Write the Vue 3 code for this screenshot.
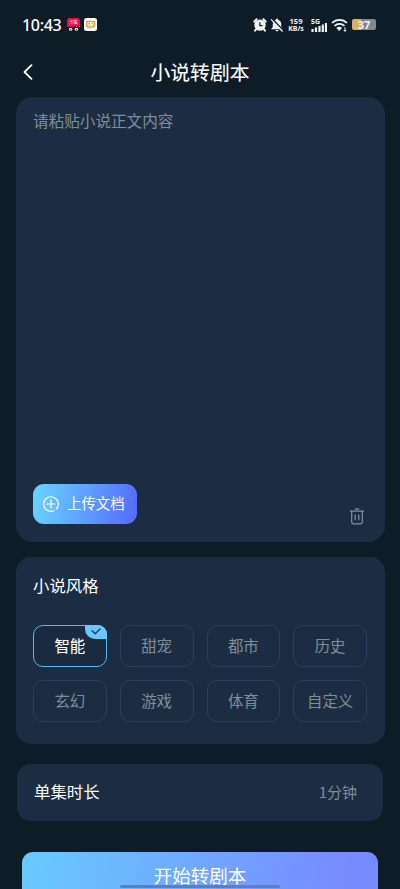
<script setup>
import { ref } from 'vue'

const styles = ['智能', '甜宠', '都市', '历史', '玄幻', '游戏', '体育', '自定义']
const selected = ref('智能')
</script>

<template>
  <div class="screen">
    <div class="status">
      <span class="clock">10:43</span>
      <svg class="app-icon" viewBox="0 0 13 13">
        <rect width="13" height="13" rx="2.5" fill="#080a0d" />
        <path d="M2.5 0h8A2.5 2.5 0 0 1 13 2.5V8.7H0V2.5A2.5 2.5 0 0 1 2.5 0Z" fill="#ef0d50" />
        <text x="6.5" y="6.2" text-anchor="middle" font-size="4" fill="#fff">天猫</text>
        <ellipse cx="3.6" cy="11.4" rx="1.8" ry="1.4" fill="#fff" />
        <ellipse cx="9.4" cy="11.4" rx="1.8" ry="1.4" fill="#fff" />
        <circle cx="3.6" cy="11.6" r=".6" fill="#111" />
        <circle cx="9.4" cy="11.6" r=".6" fill="#111" />
      </svg>
      <svg class="app-icon second" viewBox="0 0 13 13">
        <rect width="13" height="13" rx="2.5" fill="#fff" />
        <path d="M2.200 2.600 4.300 3q2.300-.8 4.500 0l2.100-.5.1 2.600c.8 3.400-1.200 5.400-4.500 5.400S1.300 8.400 2.100 5Z" fill="#f5a32c" />
        <ellipse cx="6.600" cy="5.900" rx="3.200" ry="1.900" fill="#fff" />
        <circle cx="5.300" cy="5.800" r=".7" fill="#c9741a" />
        <circle cx="8" cy="5.600" r=".7" fill="#c9741a" />
        <path d="M3.800 8.800q2.800 1 5.400 0" stroke="#fff" stroke-width=".5" fill="none" />
      </svg>
      <div class="status-right">
        <svg class="alarm" viewBox="0 0 14 14">
          <path d="M1.200 3.600 3.600 1.200M12.800 3.600 10.400 1.200M3.300 11 2 12.700M10.700 11 12 12.700" stroke="#f1f4f6" stroke-width="2" stroke-linecap="round" />
          <circle cx="7" cy="7.100" r="5.700" fill="#f1f4f6" />
          <path d="M6.800 4.200v3.500h2.700" stroke="#0e1c28" stroke-width="1.200" fill="none" />
        </svg>
        <svg class="bell" viewBox="0 0 14 14">
          <path d="M7 .7c.8 0 1.200.5 1.200 1.200 2 .5 3 2 3 4v3l1.500 1.800v.5H1.300v-.5L2.800 9V6c0-2 1-3.600 3-4.100C5.800 1.200 6.200.7 7 .7Z M5.400 12h3.200c-.4 1.700-2.800 1.700-3.200 0Z" fill="#f1f4f6" />
          <path d="M2 .6 13.400 12.600" stroke="#0e1c28" stroke-width="1.400" />
          <path d="M1 1.300 12.600 13.500" stroke="#f1f4f6" stroke-width="1.200" />
        </svg>
        <div class="speed"><span>159</span><span>KB/s</span></div>
        <div class="signal">
          <span>5G</span>
          <svg viewBox="0 0 16 9">
            <path d="M1.500 6v3M5 4.500v4.500M8.500 3v6M11.800 1.500v7.500M15 0v9" stroke="#f1f4f6" stroke-width="2.200" />
          </svg>
        </div>
        <svg class="wifi" viewBox="0 0 17 14">
          <path d="M1 5C5.300.7 11.700.7 16 5M3.500 7.800c2.900-2.700 7.100-2.700 10 0" stroke="#f1f4f6" stroke-width="1.700" fill="none" />
          <path d="M5.300 9.900c1.800-1.400 4-1.400 5.800 0L8.200 13Z" fill="#f1f4f6" />
          <path d="M14 9.300v4M12.800 12l1.200 1.400 1.200-1.400" stroke="#f1f4f6" stroke-width="1" fill="none" />
        </svg>
        <div class="battery">37</div>
      </div>
    </div>

    <header class="header">
      <svg class="back" viewBox="0 0 10 16">
        <path d="M8.500 1.200 1.500 8l7 6.800" stroke="#fff" stroke-width="1.800" stroke-linecap="round" stroke-linejoin="round" fill="none" />
      </svg>
      <h1>小说转剧本</h1>
    </header>

    <section class="card editor">
      <p class="placeholder">请粘贴小说正文内容</p>
      <div class="tools">
        <button class="upload">
          <svg viewBox="0 0 16 16">
            <path d="M10.800 14.800A7.300 7.300 0 1 1 14.200 11.900M8 3.900v8.200M3.900 8h8.200" stroke="#fff" stroke-width="1.200" stroke-linecap="round" fill="none" />
            <path d="M13.100 13.200 14.200 11.900" stroke="#fff" stroke-width="1.200" />
          </svg>
          <span>上传文档</span>
        </button>
        <svg class="trash" viewBox="0 0 14 17">
          <path d="M0 3.200h14M4.800 1.200h4.400M1.700 3.200v10.900q0 1.700 1.700 1.700h7.200q1.700 0 1.700-1.700V3.200M5.200 6.500v5.800M8.800 6.500v5.800" stroke="#8492a0" stroke-width="1.200" fill="none" />
        </svg>
      </div>
    </section>

    <section class="card genre">
      <h2>小说风格</h2>
      <div class="grid">
        <button
          v-for="name in styles"
          :key="name"
          class="chip"
          :class="{ active: name === selected }"
          @click="selected = name"
        >
          {{ name }}
          <span v-if="name === selected" class="tick">
            <svg viewBox="0 0 10 7">
              <path d="M1 2.800 4.200 5.800 9 1" stroke="#1c3a55" stroke-width="1.300" stroke-linecap="round" stroke-linejoin="round" fill="none" />
            </svg>
          </span>
        </button>
      </div>
    </section>

    <section class="card duration">
      <h2>单集时长</h2>
      <span>1分钟</span>
    </section>

    <button class="submit">开始转剧本</button>
    <div class="home-bar"></div>
  </div>
</template>

<style>
body {
  background: #0e1c28;
}
</style>

<style scoped>
.screen {
  position: relative;
  box-sizing: border-box;
  width: 400px;
  height: 889px;
  overflow: hidden;
  display: flex;
  flex-direction: column;
  background: #0e1c28;
  color: #fff;
  font-family: "Noto Sans CJK SC", sans-serif;
}
h1, h2, p {
  margin: 0;
  font-weight: 400;
}
button {
  font-family: inherit;
  color: inherit;
  border: 0;
  padding: 0;
}
svg {
  display: block;
  flex: none;
}
.status {
  flex: none;
  display: flex;
  align-items: center;
  height: 49px;
  padding: 0 24px 0 22px;
}
.clock {
  width: 39px;
  font: 500 16px/20px "Noto Sans", sans-serif;
  letter-spacing: -0.3px;
}
.app-icon {
  width: 13px;
  height: 13px;
  margin-left: 6px;
}
.app-icon.second {
  margin-left: 4px;
}
.status-right {
  display: flex;
  align-items: center;
  margin-left: auto;
  color: #f1f4f6;
}
.alarm {
  width: 14px;
  height: 14px;
}
.bell {
  width: 14px;
  height: 14px;
  margin-left: 3px;
}
.speed {
  display: flex;
  flex-direction: column;
  align-items: center;
  width: 16px;
  margin-left: 4px;
  font: 700 7px/8px "Noto Sans", sans-serif;
}
.speed span:first-child {
  font-size: 7.5px;
}
.signal {
  width: 16px;
  margin-left: 7px;
  font: 700 7px/7px "Noto Sans", sans-serif;
}
.signal span {
  display: block;
}
.signal svg {
  width: 16px;
  height: 9px;
  margin-top: -2px;
}
.wifi {
  width: 17px;
  height: 14px;
  margin-left: 4px;
}
.battery {
  width: 24px;
  height: 11px;
  margin-left: 4px;
  border-radius: 2px;
  background: linear-gradient(90deg, #d9b061 0 37%, #808890 37%);
  font: 700 11px/11px "Noto Sans", sans-serif;
  text-align: center;
}
.header {
  flex: none;
  display: flex;
  align-items: center;
  height: 48px;
  box-sizing: border-box;
  padding: 0 23px 2px;
}
.back {
  width: 10px;
  height: 16px;
}
.header h1 {
  flex: 1;
  margin-right: 10px;
  font-size: 19.8px;
  line-height: 28px;
  text-align: center;
  -webkit-text-stroke: 0.1px #fff;
}
.card {
  box-sizing: border-box;
  flex: none;
  margin: 0 15.5px;
  background: #1c2d43;
  border-radius: 17px;
}
.editor {
  display: flex;
  flex-direction: column;
  justify-content: space-between;
  height: 444.5px;
  padding: 12px 20px 18px 17.5px;
}
.placeholder {
  font-size: 15.6px;
  line-height: 23px;
  color: #7f8d9a;
}
.tools {
  display: flex;
  justify-content: space-between;
  align-items: flex-end;
}
.upload {
  display: flex;
  align-items: center;
  gap: 8px;
  width: 104px;
  height: 40px;
  padding-left: 10px;
  border-radius: 11px;
  background: linear-gradient(100deg, #69d5ff, #5569ff);
  font-size: 14.4px;
}
.upload span {
  padding-bottom: 2px;
}
.upload svg {
  width: 16px;
  height: 16px;
}
.trash {
  width: 14px;
  height: 17px;
  margin: 0 1px -1px 0;
}
.genre {
  height: 187px;
  margin-top: 15.5px;
  padding: 16px 17.5px 0;
  border-radius: 15px;
}
h2 {
  font-size: 16.4px;
  line-height: 24px;
}
.grid {
  display: grid;
  grid-template-columns: repeat(4, 1fr);
  gap: 13.5px 13px;
  margin-top: 27.5px;
}
.chip {
  position: relative;
  box-sizing: border-box;
  height: 42px;
  padding-bottom: 2px;
  border: 1px solid #2d3f5e;
  border-radius: 10px;
  background: transparent;
  color: #7f8d9a;
  font-size: 15.4px;
}
.chip.active {
  border: 1.5px solid #5cb9ec;
  background: #1a2b41;
  color: #fff;
  -webkit-text-stroke: 0.1px #fff;
}
.tick {
  position: absolute;
  top: -1px;
  right: -1px;
  display: flex;
  align-items: center;
  justify-content: center;
  width: 22px;
  height: 14px;
  border-radius: 0 9px 0 10px;
  background: #68c8ff;
}
.tick svg {
  width: 10px;
  height: 7px;
}
.duration {
  display: flex;
  align-items: center;
  justify-content: space-between;
  height: 57px;
  margin: 19.5px 17px 0;
  padding: 0 26px 2px 17px;
  border-radius: 14px;
}
.duration span {
  font-size: 15px;
  color: #7f8d9a;
}
.submit {
  box-sizing: border-box;
  flex: none;
  height: 50px;
  margin: 31px 22px 0;
  padding-bottom: 4px;
  border-radius: 11px;
  background: linear-gradient(100deg, #68caff, #788aff 90%);
  font-size: 18.5px;
  line-height: 46px;
}
.home-bar {
  position: absolute;
  left: 120px;
  bottom: 1px;
  width: 160px;
  height: 3px;
  border-radius: 2px;
  background: #607fb5;
}
</style>
